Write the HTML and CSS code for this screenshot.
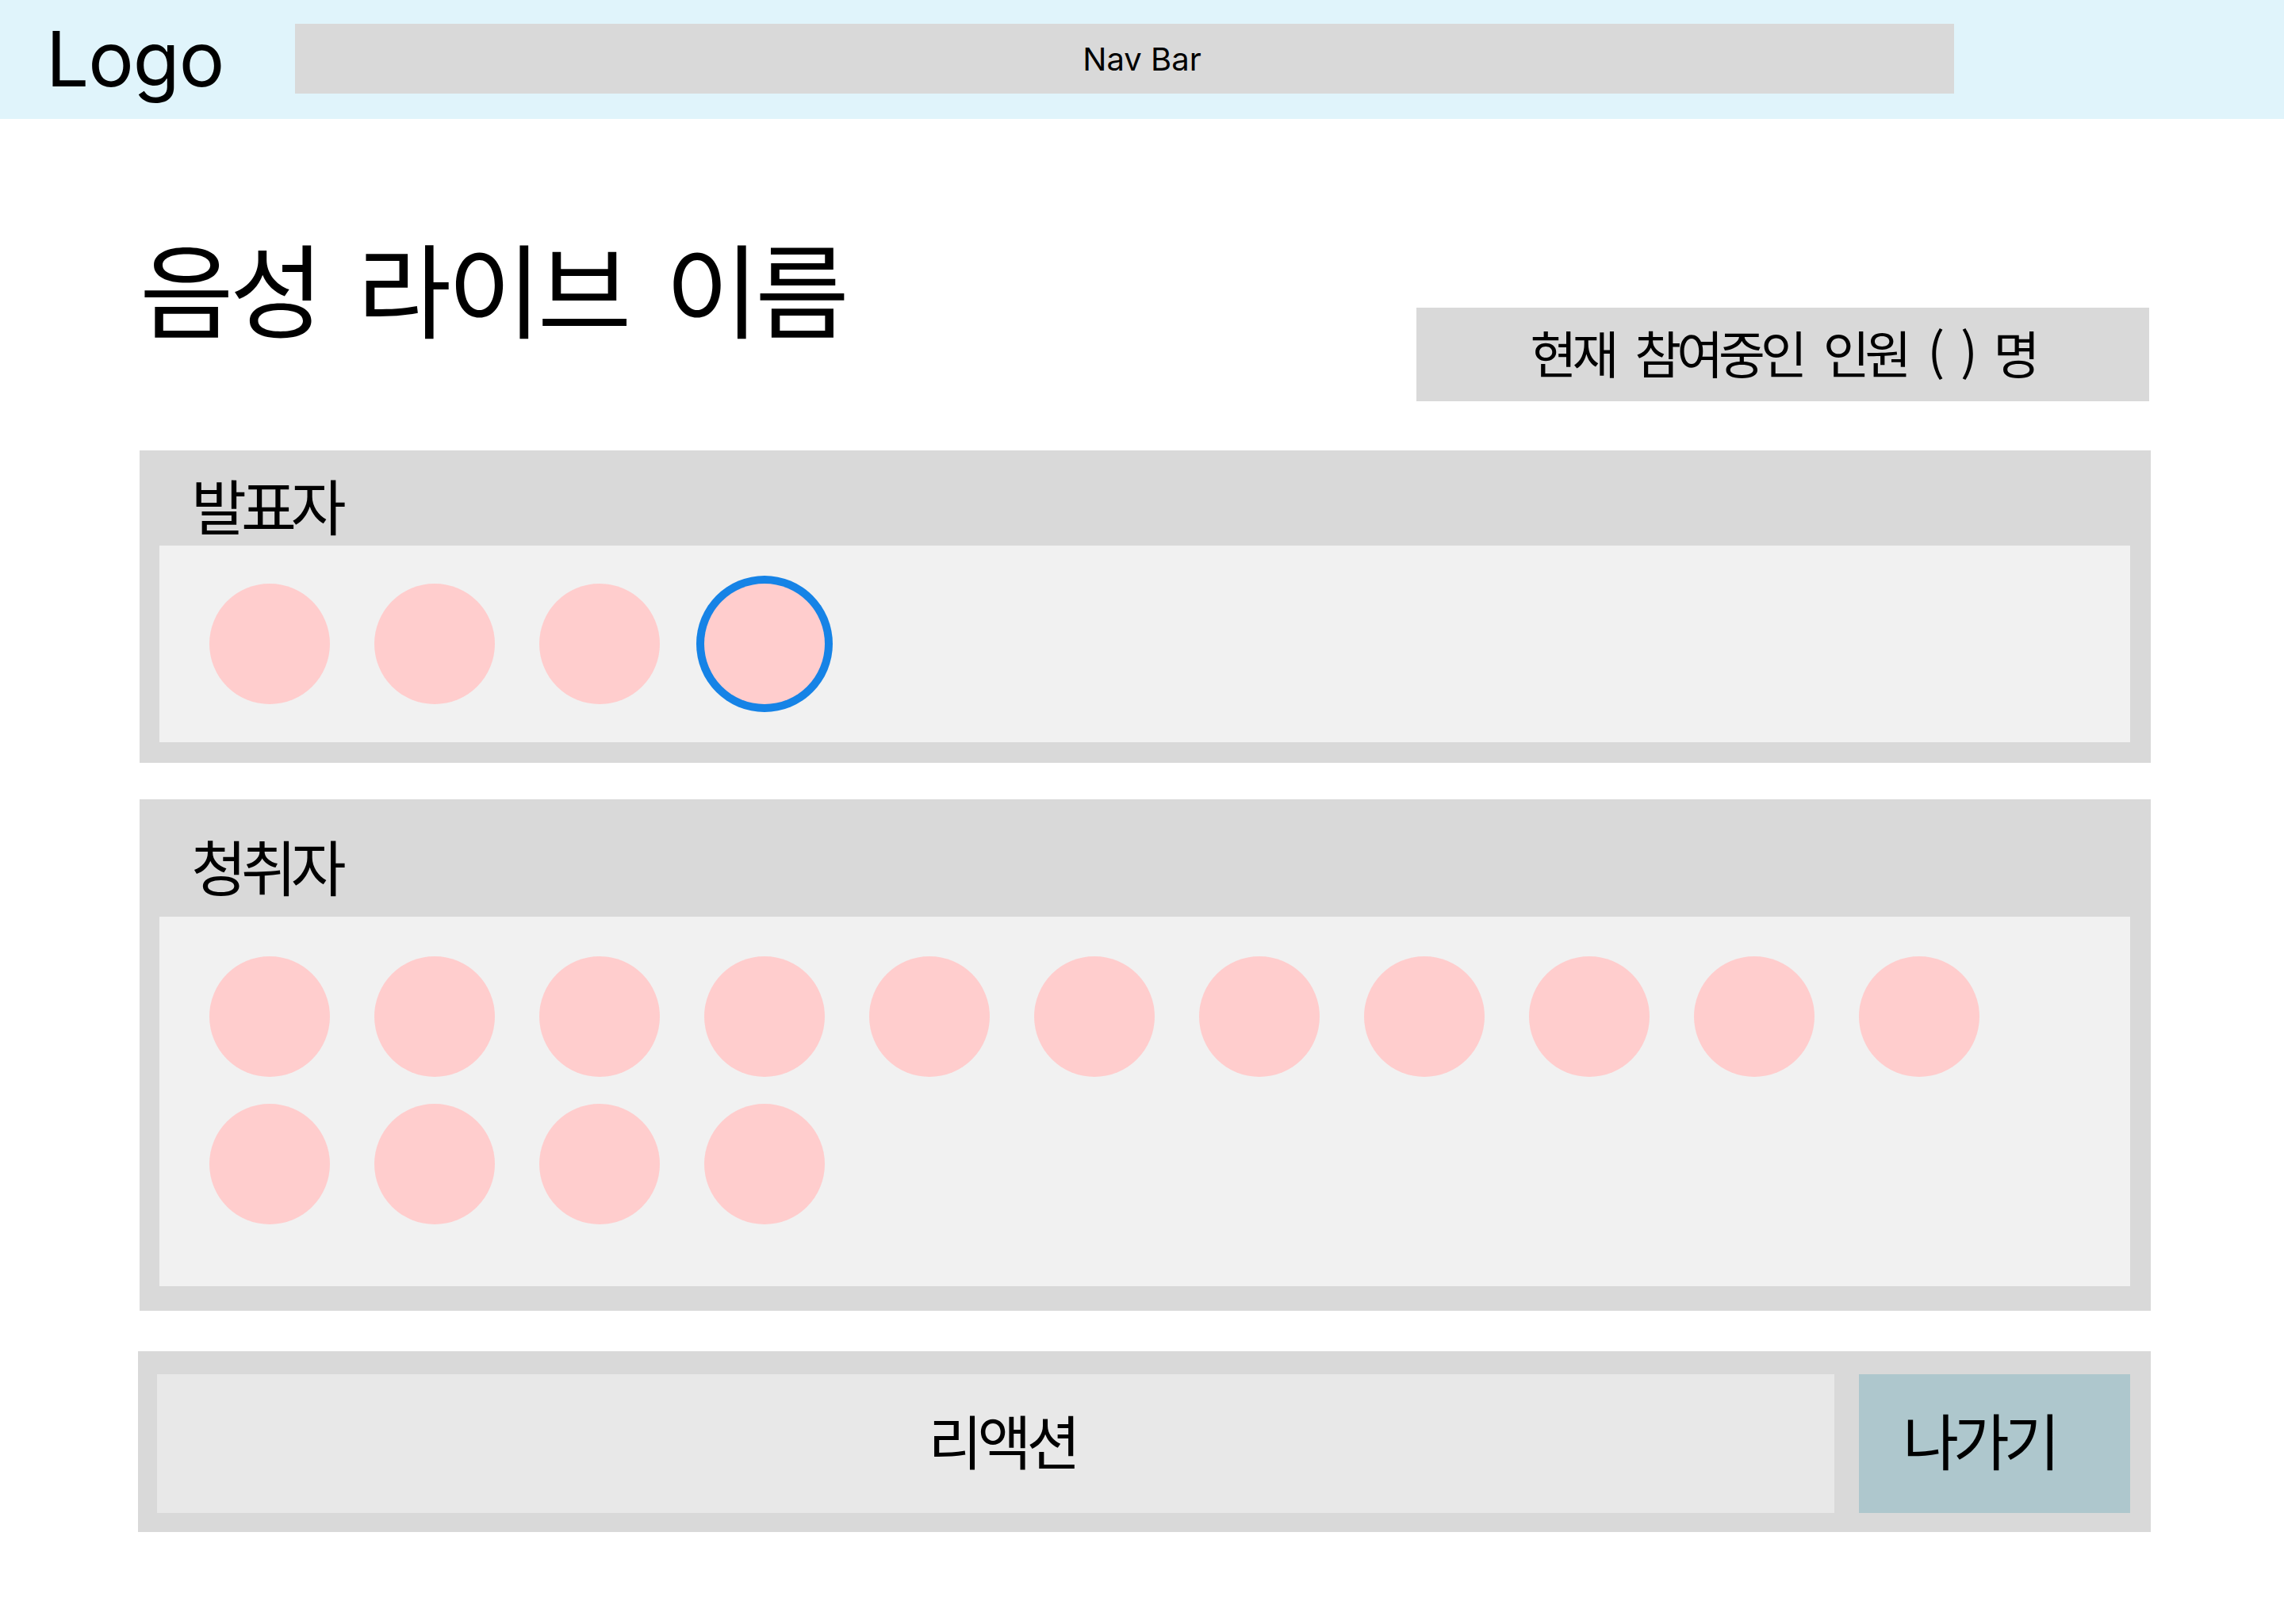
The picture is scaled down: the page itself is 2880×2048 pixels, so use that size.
FILE: index.html
```html
<!DOCTYPE html>
<html lang="ko">
<head>
<meta charset="utf-8">
<title>음성 라이브</title>
<link rel="stylesheet" href="styles.css">
</head>
<body>
<header class="header">
  <div class="logo">Logo</div>
  <nav class="nav">Nav Bar</nav>
</header>
<main class="main">
  <div class="title-row">
    <h1 class="title">음성 라이브 이름</h1>
    <div class="count">현재 참여중인 인원 ( ) 명</div>
  </div>
  <section class="panel panel-speaker">
    <div class="panel-head"><h2 class="label">발표자</h2></div>
    <div class="panel-body">
      <div class="avatar"></div>
      <div class="avatar"></div>
      <div class="avatar"></div>
      <div class="avatar avatar-active"></div>
    </div>
  </section>
  <section class="panel panel-listener">
    <div class="panel-head"><h2 class="label">청취자</h2></div>
    <div class="panel-body">
      <div class="avatar"></div><div class="avatar"></div><div class="avatar"></div>
      <div class="avatar"></div><div class="avatar"></div><div class="avatar"></div>
      <div class="avatar"></div><div class="avatar"></div><div class="avatar"></div>
      <div class="avatar"></div><div class="avatar"></div><div class="avatar"></div>
      <div class="avatar"></div><div class="avatar"></div><div class="avatar"></div>
    </div>
  </section>
  <section class="bar">
    <div class="reaction">리액션</div>
    <div class="exit">나가기</div>
  </section>
</main>
</body>
</html>
```
FILE: styles.css
```css
* { box-sizing: border-box; }
html, body { margin: 0; padding: 0; background: #ffffff; }
body {
  font-family: "Noto Sans CJK KR", "Noto Sans", sans-serif;
  color: #000000;
}
.header {
  height: 150px;
  background: #e0f4fb;
  display: flex;
  align-items: flex-start;
  padding-left: 58px;
}
.logo {
  width: 314px;
  font-family: Inter, "Noto Sans", sans-serif;
  font-size: 96px;
  line-height: 1;
  margin-top: 26px;
  letter-spacing: -1px;
}
.nav {
  margin-top: 30px;
  width: 2092px;
  height: 88px;
  background: #d9d9d9;
  display: flex;
  align-items: center;
  justify-content: center;
  padding-left: 44px;
  font-family: Inter, "Noto Sans", sans-serif;
  font-size: 40px;
}
.main {
  margin-left: 176px;
  width: 2536px;
  display: flow-root;
}
.title-row {
  display: flex;
  align-items: flex-start;
  justify-content: space-between;
  height: 356px;
}
.title {
  margin: 146px 0 0 0;
  font-size: 129px;
  line-height: 1;
  font-weight: 400;
  letter-spacing: -5px;
  word-spacing: 16px;
}
.count {
  margin-top: 238px;
  margin-right: 2px;
  width: 924px;
  height: 118px;
  background: #d9d9d9;
  display: flex;
  align-items: center;
  justify-content: center;
  padding-bottom: 8px;
  font-size: 64px;
  letter-spacing: -6px;
  word-spacing: 14px;
}
.panel {
  background: #d9d9d9;
  padding: 0 26px 26px 25px;
}
.panel-speaker { margin-top: 62px; }
.panel-listener { margin-top: 46px; padding-bottom: 31px; }
.panel-head {
  height: 120px;
  padding: 30px 0 0 40px;
}
.panel-listener .panel-head {
  height: 148px;
  padding-top: 45px;
}
.label {
  margin: 0;
  font-size: 76px;
  line-height: 1;
  font-weight: 400;
  letter-spacing: -7px;
}
.panel-body {
  background: #f1f1f1;
  display: flex;
  flex-wrap: wrap;
  gap: 34px 56px;
  padding: 48px 63px;
}
.panel-listener .panel-body { padding: 50px 63px 78px; }
.avatar {
  width: 152px;
  height: 152px;
  border-radius: 50%;
  background: #ffcdcd;
}
.avatar-active {
  box-shadow: 0 0 0 10px #1683e6;
}
.bar {
  margin-top: 51px;
  margin-left: -2px;
  width: 2538px;
  background: #d9d9d9;
  display: flex;
  gap: 31px;
  padding: 29px 26px 24px 24px;
}
.reaction {
  flex: 1;
  height: 175px;
  background: #e8e8e8;
  display: flex;
  align-items: center;
  justify-content: center;
  padding-left: 16px;
  padding-bottom: 12px;
  font-size: 74px;
  letter-spacing: -6px;
}
.exit {
  width: 342px;
  height: 175px;
  background: #aec7cd;
  display: flex;
  align-items: center;
  justify-content: center;
  padding-right: 40px;
  padding-bottom: 12px;
  font-size: 77px;
  letter-spacing: -7px;
}
```
